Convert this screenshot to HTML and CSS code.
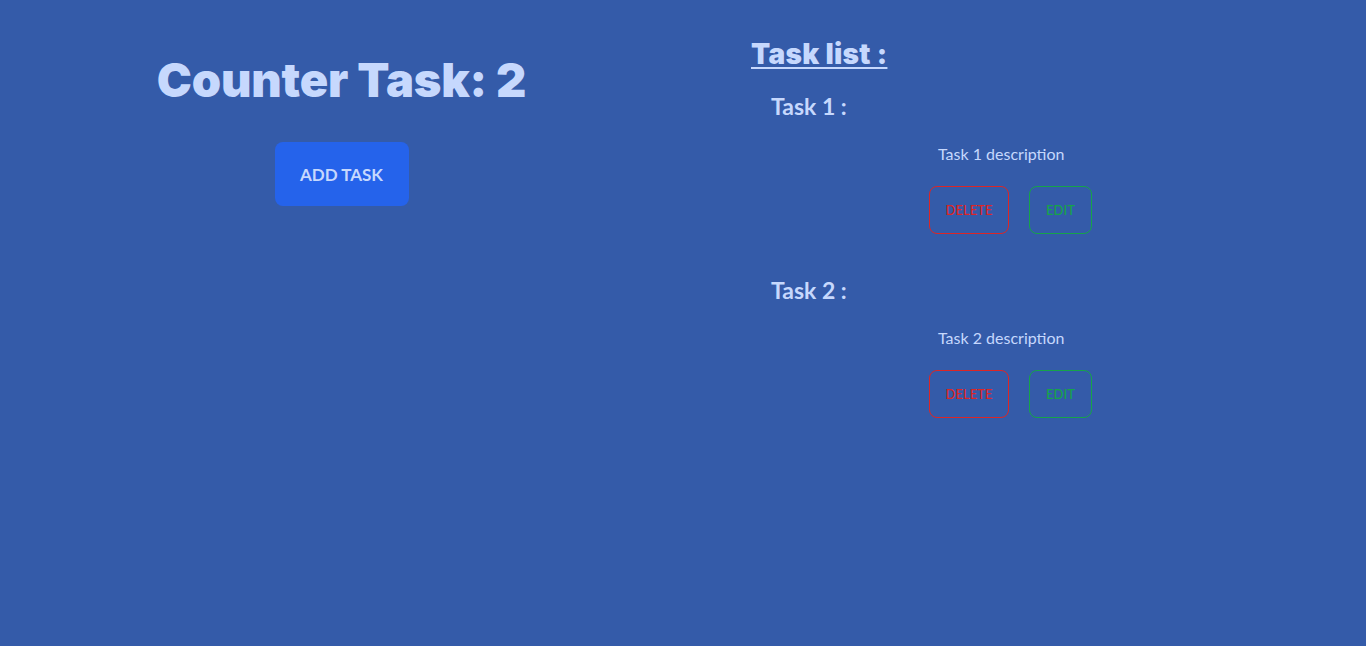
FILE: index.html
```html
<!DOCTYPE html>
<html>
<head>
<meta charset="utf-8">
<link rel="stylesheet" href="styles.css">
</head>
<body>
<main class="app">
  <section class="counter">
    <h1 class="counter-title">Counter Task: 2</h1>
    <button class="add-btn">ADD TASK</button>
  </section>
  <section class="tasks">
    <h2 class="tasks-title">Task list :</h2>
    <div class="task">
      <h3 class="task-name">Task 1 :</h3>
      <div class="task-body">
        <p class="task-desc">Task 1 description</p>
        <div class="task-actions">
          <button class="btn-delete">DELETE</button>
          <button class="btn-edit">EDIT</button>
        </div>
      </div>
    </div>
    <div class="task">
      <h3 class="task-name">Task 2 :</h3>
      <div class="task-body">
        <p class="task-desc">Task 2 description</p>
        <div class="task-actions">
          <button class="btn-delete">DELETE</button>
          <button class="btn-edit">EDIT</button>
        </div>
      </div>
    </div>
  </section>
</main>
</body>
</html>
```
FILE: styles.css
```css
html, body {
  margin: 0;
  padding: 0;
}
* {
  box-sizing: border-box;
}
body {
  background: #345ba9;
  color: #c6d8fd;
  font-family: Lato, "Noto Sans", sans-serif;
  min-height: 646px;
}
.app {
  display: flex;
}
.counter {
  flex: 0 0 50%;
  display: flex;
  flex-direction: column;
  align-items: center;
  padding-top: 56px;
}
.counter-title {
  margin: 0;
  font-family: Inter, sans-serif;
  font-size: 47px;
  line-height: 48px;
  font-weight: 900;
  letter-spacing: -0.2px;
}
.add-btn {
  margin-top: 38px;
  width: 134px;
  height: 64px;
  border: none;
  border-radius: 8px;
  background: #2563eb;
  color: #c6d8fd;
  font-family: inherit;
  font-size: 17px;
  font-weight: 700;
}
.tasks {
  flex: 0 0 50%;
  padding-top: 36px;
  padding-left: 68px;
}
.tasks-title {
  margin: 0;
  font-family: Inter, sans-serif;
  font-size: 28px;
  line-height: 36px;
  font-weight: 900;
  letter-spacing: 0.3px;
  text-decoration: underline;
  text-underline-offset: 3px;
}
.task {
  padding-left: 20px;
  padding-bottom: 22px;
}
.task-name {
  margin: 0;
  padding-top: 18px;
  font-size: 23px;
  line-height: 32px;
  font-weight: 700;
}
.task-body {
  padding-left: 158px;
}
.task-desc {
  margin: 0;
  padding-top: 20px;
  padding-left: 9px;
  font-size: 16px;
  line-height: 24px;
}
.task-actions {
  display: flex;
  gap: 20px;
  margin-top: 20px;
}
.task-actions button {
  height: 48px;
  background: transparent;
  border-radius: 8px;
  font-family: inherit;
  font-size: 13px;
  font-weight: 500;
  padding: 0;
}
.btn-delete {
  width: 80px;
  border: 1px solid #dc2626;
  color: #dc2626;
}
.btn-edit {
  width: 63px;
  border: 1px solid #16a34a;
  color: #16a34a;
}
```
